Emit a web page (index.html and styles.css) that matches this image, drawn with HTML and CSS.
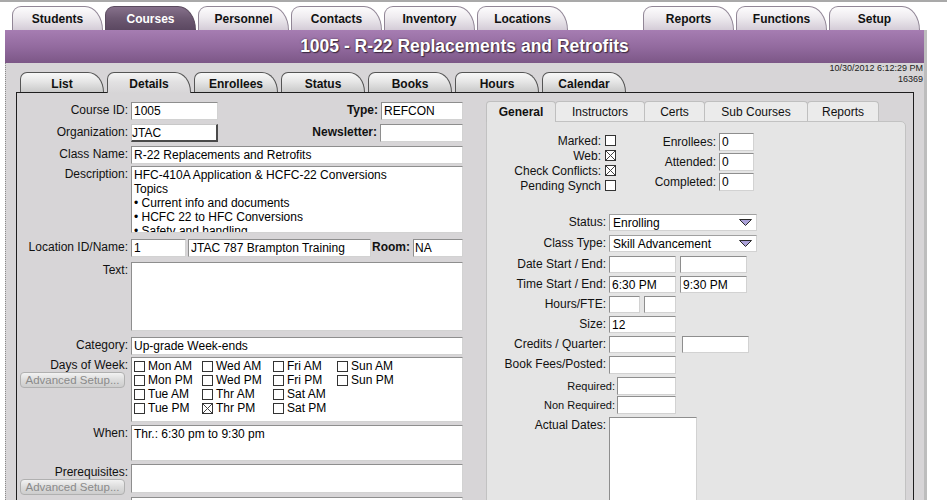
FILE: index.html
```html
<!DOCTYPE html>
<html lang="en">
<head>
    <meta charset="UTF-8">
    <meta name="viewport" content="width=device-width, initial-scale=1.0">
    <title>Courses - 1005 R-22 Replacements and Retrofits</title>
    <link rel="stylesheet" href="styles.css">
</head>
<body>
    <div class="app">
        <!-- Module tabs -->
        <nav class="top-tabs">
            <span class="tab">Students</span>
            <span class="tab active">Courses</span>
            <span class="tab">Personnel</span>
            <span class="tab">Contacts</span>
            <span class="tab">Inventory</span>
            <span class="tab">Locations</span>
            <span class="tab push">Reports</span>
            <span class="tab">Functions</span>
            <span class="tab">Setup</span>
        </nav>

        <!-- Record title -->
        <header class="banner">
            <h1>1005 - R-22 Replacements and Retrofits</h1>
        </header>

        <div class="workspace">
            <div class="sub-head">
                <nav class="sub-tabs">
                    <span class="stab">List</span>
                    <span class="stab active">Details</span>
                    <span class="stab">Enrollees</span>
                    <span class="stab">Status</span>
                    <span class="stab">Books</span>
                    <span class="stab">Hours</span>
                    <span class="stab">Calendar</span>
                </nav>
                <div class="stamp">10/30/2012 6:12:29 PM<br>16369</div>
            </div>

            <section class="panel">
                <!-- Course details -->
                <form class="details">
                    <label class="lbl">Course ID:</label>
                    <div class="fld">
                        <input class="in w87" value="1005" readonly>
                        <span class="blbl">Type:</span>
                        <input class="in w82" value="REFCON" readonly>
                    </div>

                    <label class="lbl">Organization:</label>
                    <div class="fld">
                        <input class="in w87 raised" value="JTAC" readonly>
                        <span class="blbl">Newsletter:</span>
                        <input class="in w83" value="" readonly>
                    </div>

                    <label class="lbl">Class Name:</label>
                    <input class="in full" value="R-22 Replacements and Retrofits" readonly>

                    <label class="lbl">Description:</label>
                    <textarea class="ta full desc" readonly>HFC-410A Application &amp; HCFC-22 Conversions
Topics
• Current info and documents
• HCFC 22 to HFC Conversions
• Safety and handling</textarea>

                    <label class="lbl">Location ID/Name:</label>
                    <div class="fld">
                        <input class="in w55" value="1" readonly>
                        <input class="in w183 gap" value="JTAC 787 Brampton Training" readonly>
                        <span class="blbl">Room:</span>
                        <input class="in w50 nopad" value="NA" readonly>
                    </div>

                    <label class="lbl">Text:</label>
                    <textarea class="ta full text" readonly></textarea>

                    <label class="lbl">Category:</label>
                    <input class="in full" value="Up-grade Week-ends" readonly>

                    <div class="lbl">Days of Week:<span class="adv">Advanced Setup...</span></div>
                    <div class="days">
                        <span class="day"><i class="cb"></i>Mon AM</span>
                        <span class="day"><i class="cb"></i>Wed AM</span>
                        <span class="day"><i class="cb"></i>Fri AM</span>
                        <span class="day"><i class="cb"></i>Sun AM</span>
                        <span class="day"><i class="cb"></i>Mon PM</span>
                        <span class="day"><i class="cb"></i>Wed PM</span>
                        <span class="day"><i class="cb"></i>Fri PM</span>
                        <span class="day"><i class="cb"></i>Sun PM</span>
                        <span class="day"><i class="cb"></i>Tue AM</span>
                        <span class="day"><i class="cb"></i>Thr AM</span>
                        <span class="day"><i class="cb"></i>Sat AM</span>
                        <span></span>
                        <span class="day"><i class="cb"></i>Tue PM</span>
                        <span class="day"><i class="cb on"></i>Thr PM</span>
                        <span class="day"><i class="cb"></i>Sat PM</span>
                    </div>

                    <label class="lbl">When:</label>
                    <textarea class="ta full when" readonly>Thr.: 6:30 pm to 9:30 pm</textarea>

                    <div class="lbl">Prerequisites:<span class="adv">Advanced Setup...</span></div>
                    <textarea class="ta full prereq" readonly></textarea>

                    <label class="lbl">Supplies:</label>
                    <input class="in full" value="" readonly>
                </form>

                <!-- General / scheduling -->
                <div class="side">
                    <nav class="side-tabs">
                        <span class="ttab active w70">General</span>
                        <span class="ttab w90">Instructors</span>
                        <span class="ttab w61">Certs</span>
                        <span class="ttab w104">Sub Courses</span>
                        <span class="ttab w72">Reports</span>
                    </nav>
                    <div class="sbox">
                        <div class="flags">
                            <div class="checks">
                                <div>Marked: <i class="cb"></i></div>
                                <div>Web: <i class="cb on"></i></div>
                                <div>Check Conflicts: <i class="cb on"></i></div>
                                <div>Pending Synch <i class="cb"></i></div>
                            </div>
                            <div class="counts">
                                <span class="rlbl">Enrollees:</span><input class="in w35" value="0" readonly>
                                <span class="rlbl">Attended:</span><input class="in w35" value="0" readonly>
                                <span class="rlbl">Completed:</span><input class="in w35" value="0" readonly>
                            </div>
                        </div>

                        <div class="sched">
                            <span class="rlbl">Status:</span>
                            <div class="sel">Enrolling
                                <svg width="13" height="7" viewBox="0 0 13 7"><path d="M0.5 0.5H12.5L6.5 6.5Z" fill="#aba1d8" stroke="#2a2a2a"/></svg>
                            </div>

                            <span class="rlbl">Class Type:</span>
                            <div class="sel">Skill Advancement
                                <svg width="13" height="7" viewBox="0 0 13 7"><path d="M0.5 0.5H12.5L6.5 6.5Z" fill="#aba1d8" stroke="#2a2a2a"/></svg>
                            </div>

                            <span class="rlbl">Date Start / End:</span>
                            <div class="fld">
                                <input class="in w67" value="" readonly>
                                <input class="in w67 gap4" value="" readonly>
                            </div>

                            <span class="rlbl">Time Start / End:</span>
                            <div class="fld">
                                <input class="in w67" value="6:30 PM" readonly>
                                <input class="in w67 gap4" value="9:30 PM" readonly>
                            </div>

                            <span class="rlbl">Hours/FTE:</span>
                            <div class="fld">
                                <input class="in w31" value="" readonly>
                                <input class="in w32 gap4" value="" readonly>
                            </div>

                            <span class="rlbl">Size:</span>
                            <input class="in w67" value="12" readonly>

                            <span class="rlbl">Credits / Quarter:</span>
                            <div class="fld">
                                <input class="in w67" value="" readonly>
                                <input class="in w67 gap6" value="" readonly>
                            </div>

                            <span class="rlbl">Book Fees/Posted:</span>
                            <input class="in w67 tall" value="" readonly>

                            <span class="rlbl small">Required:</span>
                            <input class="in w59 tall indent" value="" readonly>

                            <span class="rlbl small">Non Required:</span>
                            <input class="in w59 tall indent" value="" readonly>

                            <span class="rlbl">Actual Dates:</span>
                            <textarea class="ta dates" readonly></textarea>
                        </div>
                    </div>
                </div>
            </section>
        </div>
    </div>
</body>
</html>
```

FILE: styles.css
```css
* {
    box-sizing: border-box;
}

html, body {
    margin: 0;
    height: 500px;
    overflow: hidden;
}

body {
    background: #fff;
    border-top: 2px solid #a9a9a9;
    font-family: "Liberation Sans", Arial, sans-serif;
    font-size: 12px;
    color: #111;
}

.app {
    width: 922px;
    margin-left: 5px;
}

/* Module tabs */
.top-tabs {
    display: flex;
    gap: 2px;
    height: 28px;
    padding: 4px 7px 0 7px;
}

.tab {
    width: 91px;
    height: 24px;
    line-height: 25px;
    text-align: center;
    font-weight: bold;
    color: #111;
    background: linear-gradient(#fdfcfd, #eeebef 45%, #d4ccd7);
    border: 1px solid #918696;
    border-bottom: none;
    border-radius: 9px 18px 0 0 / 9px 24px 0 0;
}

.tab.active {
    color: #fff;
    background: linear-gradient(#86718b, #6c5871 50%, #5b4861);
    border-color: #5a4a5e;
}

.tab.push {
    margin-left: auto;
}

/* Title banner */
.banner {
    height: 33px;
    display: flex;
    align-items: center;
    justify-content: center;
    background: linear-gradient(#a67db2, #936b9f 50%, #7c5787);
    border-right: 3px solid #bdbdbd;
}

.banner h1 {
    margin: 0;
    font-size: 17.5px;
    font-weight: bold;
    color: #fff;
    text-shadow: 1px 1px 1px #3b2a40, 0 0 2px #4b3651;
}

/* Grey work area */
.workspace {
    height: 437px;
    overflow: hidden;
    background: #d7d5d7;
    border-left: 1px dotted #8a8a8a;
    border-right: 3px solid #bdbdbd;
}

.sub-head {
    display: flex;
    justify-content: space-between;
    align-items: flex-start;
}

.sub-tabs {
    display: flex;
    gap: 3px;
    margin: 9px 0 0 14px;
}

.stab {
    width: 84px;
    height: 20px;
    line-height: 22px;
    text-align: center;
    font-weight: bold;
    background: linear-gradient(#f8f8f8, #e6e6e6 45%, #c9c9c9);
    border: 1px solid #555;
    border-bottom: none;
    border-radius: 7px 16px 0 0 / 7px 20px 0 0;
}

.stab.active {
    position: relative;
    z-index: 1;
    height: 21px;
    margin-bottom: -1px;
    background: linear-gradient(#f4f4f4, #e2e1e2 45%, #d7d5d7);
}

.stamp {
    font-size: 9px;
    line-height: 11px;
    text-align: right;
    padding-right: 1px;
    color: #222;
}

.panel {
    display: flex;
    align-items: flex-start;
    width: 898px;
    height: 420px;
    margin-left: 10px;
    padding-top: 9px;
    border: 1px solid #1e1e1e;
    background: #d7d5d7;
}

/* Form fields */
.in {
    display: block;
    height: 18px;
    margin: 0;
    padding: 0 2px;
    font: 12px "Liberation Sans", Arial, sans-serif;
    color: #000;
    background: #fff;
    border: 1px solid #d2d2d2;
    border-top-color: #8e8e8e;
    border-left-color: #8e8e8e;
    outline: none;
}

.in.raised {
    padding: 0;
    border-color: #c8c8c8 #4a4a4a #4a4a4a #c8c8c8;
    border-width: 1px 2px 2px 1px;
}

.in.nopad {
    padding-left: 1px;
}

.ta {
    display: block;
    margin: 0;
    padding: 1px 2px;
    resize: none;
    overflow: hidden;
    font: 12px/14px "Liberation Sans", Arial, sans-serif;
    color: #000;
    background: #fff;
    border: 1px solid #d2d2d2;
    border-top-color: #8e8e8e;
    border-left-color: #8e8e8e;
    outline: none;
}

.full { width: 332px; }
.w31 { width: 31px; }
.w32 { width: 32px; }
.w35 { width: 35px; }
.w50 { width: 50px; }
.w55 { width: 55px; }
.w59 { width: 59px; }
.w67 { width: 67px; }
.w82 { width: 82px; }
.w83 { width: 83px; }
.w87 { width: 87px; }
.w183 { width: 183px; }

.gap { margin-left: 2px; }
.gap4 { margin-left: 4px; }
.gap6 { margin-left: 6px; }

.fld {
    display: flex;
    align-items: flex-start;
}

/* Left column */
.details {
    width: 447px;
    display: grid;
    grid-template-columns: 114px 332px;
    grid-template-rows: 22px 22px 20px 73px 23px 75px 20px 68px 39px 33px 20px;
    align-items: start;
}

.lbl {
    text-align: right;
    padding: 1px 3px 0 0;
    line-height: 14px;
}

.blbl {
    flex: 1;
    text-align: right;
    padding: 1px 3px 0 0;
    line-height: 14px;
    font-weight: bold;
}

.desc { height: 67px; }
.text { height: 69px; }
.when { height: 36px; }
.prereq { height: 29px; }

.days {
    display: grid;
    grid-template-columns: 68px 71px 64px 80px;
    grid-auto-rows: 14px;
    width: 332px;
    height: 65px;
    padding: 1px 0 0 2px;
    line-height: 14px;
    color: #000;
    background: #fff;
    border: 1px solid #d2d2d2;
    border-top-color: #8e8e8e;
    border-left-color: #8e8e8e;
}

.day {
    display: flex;
    align-items: center;
    gap: 3px;
}

.cb {
    display: inline-block;
    flex: none;
    width: 11px;
    height: 11px;
    border: 1px solid #333;
    background: #fff;
}

.cb.on {
    background:
        linear-gradient(45deg, transparent 45%, #444 45%, #444 55%, transparent 55%),
        linear-gradient(-45deg, transparent 45%, #444 45%, #444 55%, transparent 55%),
        #fff;
}

.adv {
    display: block;
    width: 105px;
    height: 16px;
    margin-left: 3px;
    line-height: 14px;
    text-align: center;
    font-size: 11.5px;
    color: #8a8a8a;
    background: linear-gradient(#f2f2f2, #dcdcdc 50%, #cdcdcd);
    border: 1px solid #b0b0b0;
    border-radius: 4px;
}

/* Right column */
.side {
    width: 420px;
    margin: -1px 0 0 22px;
}

.side-tabs {
    display: flex;
    height: 20px;
}

.ttab {
    height: 20px;
    line-height: 20px;
    text-align: center;
    color: #111;
    background: #ebebeb;
    border: 1px solid #bfbfbf;
    border-bottom: none;
    border-radius: 4px 4px 0 0;
}

.ttab + .ttab {
    margin-left: -1px;
}

.ttab.active {
    position: relative;
    z-index: 1;
    height: 21px;
    margin-bottom: -1px;
    font-weight: bold;
    background: #e5e5e5;
}

.w70 { width: 70px; }
.w90 { width: 90px; }
.w61 { width: 61px; }
.w104 { width: 104px; }
.w72 { width: 72px; }

.sbox {
    height: 420px;
    padding-top: 11px;
    background: #e5e5e5;
    border: 1px solid #c2c2c2;
    border-top-right-radius: 5px;
}

.flags {
    display: flex;
    align-items: flex-start;
}

.checks {
    width: 130px;
}

.checks div {
    display: flex;
    justify-content: flex-end;
    align-items: center;
    gap: 4px;
    height: 15px;
    padding-right: 1px;
    white-space: nowrap;
}

.counts {
    display: grid;
    grid-template-columns: 100px 35px;
    grid-auto-rows: 20px;
    margin-left: 2px;
}

.rlbl {
    text-align: right;
    padding-right: 3px;
    line-height: 18px;
    white-space: nowrap;
}

.sched {
    display: grid;
    grid-template-columns: 122px 1fr;
    grid-template-rows: 21px 21px 20px 20px 20px 20px 20px 21px 19px 21px auto;
    align-items: start;
    margin-top: 21px;
}

.sched .rlbl {
    line-height: 17px;
}

.sched .in {
    height: 17px;
}

.sched .in.tall {
    height: 18px;
}

.sched .rlbl.small {
    font-size: 11px;
    line-height: 18px;
    margin-right: -9px;
}

.indent {
    margin-left: 8px;
}

.sel {
    display: flex;
    justify-content: space-between;
    align-items: center;
    width: 148px;
    height: 17px;
    padding: 0 4px 0 3px;
    color: #000;
    background: #fff;
    border: 1px solid #d2d2d2;
    border-top-color: #a0a0a0;
    border-left-color: #a0a0a0;
}

.dates {
    width: 88px;
    height: 100px;
}
```
